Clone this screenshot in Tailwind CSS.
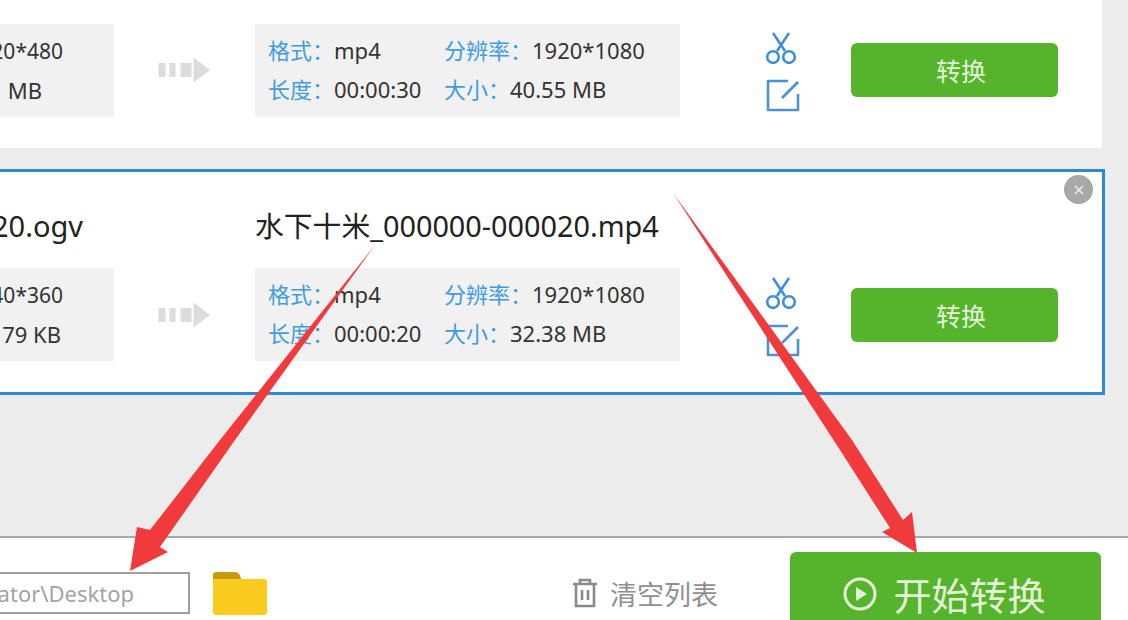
<!DOCTYPE html>
<html lang="zh">
  <head>
    <meta charset="UTF-8" />
    <script src="https://cdn.jsdelivr.net/npm/@tailwindcss/browser@4"></script>
    <title>转换列表</title>
  </head>
  <body class="m-0 bg-[#ececec]">
    <div class="relative w-[1128px] h-[620px] overflow-hidden flex flex-col font-['Noto_Sans','Noto_Sans_CJK_SC',sans-serif] text-[#333]">
      <!-- 第一行 -->
      <div class="h-[148px] w-[1102px] shrink-0 bg-white flex pt-[24px]">
        <div class="w-[114px] h-[93px] bg-[#f1f1f1] shrink-0 flex flex-col items-end pr-[51px] pt-[15px] gap-[14px] text-[22px] leading-[25px] overflow-hidden whitespace-nowrap">
          <span class="text-[21px]">20*480</span>
          <span class="pr-[21px]">MB</span>
        </div>
        <div class="w-[141px] h-[93px] flex items-center justify-center pb-[2px] shrink-0">
          <svg width="54" height="26" viewBox="0 0 54 26" fill="#dcdcdc"><rect x="0.5" y="6" width="7" height="14"/><rect x="11.5" y="6" width="6" height="14"/><rect x="22.5" y="6" width="11" height="14"/><path d="M35.5 0.5 L52 13 L35.5 25.5 Z"/></svg>
        </div>
        <div class="w-[425px] h-[93px] bg-[#f1f1f1] shrink-0 grid grid-cols-[176px_1fr] auto-rows-[25px] pl-[13px] pt-[13px] gap-y-[14px] text-[22px] leading-[25px] whitespace-nowrap">
          <div><span class="text-[#3f9ce0]">格式<span class="font-['Noto_Sans_CJK_TC']">：</span></span>mp4</div>
          <div><span class="text-[#3f9ce0]">分辨率<span class="font-['Noto_Sans_CJK_TC']">：</span></span>1920*1080</div>
          <div><span class="text-[#3f9ce0]">长度<span class="font-['Noto_Sans_CJK_TC']">：</span></span>00:00:30</div>
          <div><span class="text-[#3f9ce0]">大小<span class="font-['Noto_Sans_CJK_TC']">：</span></span>40.55 MB</div>
        </div>
        <div class="w-[171px] shrink-0 flex flex-col items-center pl-[31px] pt-[8px] gap-[15px]">
          <svg width="32" height="32" viewBox="0 0 32 32" fill="none" stroke="#3f8fd8" stroke-width="2.6"><path d="M8 1 L20 19 M24 1 L12 19"/><circle cx="8" cy="25" r="5.8"/><circle cx="24" cy="25" r="5.8"/></svg>
          <svg class="ml-[3px]" width="34" height="33" viewBox="0 0 34 33" fill="none" stroke="#4a93cf" stroke-width="2.6" stroke-linejoin="round"><path d="M22 2 H2 V31 H32 V15"/><path d="M16 19 L32 3"/></svg>
        </div>
        <div class="w-[207px] h-[54px] mt-[19px] bg-[#55b32c] rounded-[6px] shrink-0 flex items-center justify-center pl-[13px] pt-[3px] text-[#e4f3d8] text-[25px]">转换</div>
      </div>

      <!-- 第二行，选中状态 -->
      <div class="relative mt-[21px] h-[226px] w-[1105px] shrink-0 bg-white border-[3px] border-l-0 border-[#2e8ad8] flex flex-col">
        <div class="h-[96px] flex items-start pt-[37px] text-[29px] leading-[34px] text-[#222] whitespace-nowrap">
          <div class="w-[263px] ml-[-8px]">20.ogv</div>
          <div class="text-[28.8px]">水下十米_000000-000020.mp4</div>
        </div>
        <div class="flex">
          <div class="w-[114px] h-[93px] bg-[#f1f1f1] shrink-0 flex flex-col items-end pr-[51px] pt-[15px] gap-[14px] text-[22px] leading-[25px] overflow-hidden whitespace-nowrap">
            <span class="text-[21px]">40*360</span>
            <span class="pr-[2px]">79 KB</span>
          </div>
          <div class="w-[141px] h-[93px] flex items-center justify-center shrink-0">
            <svg width="54" height="26" viewBox="0 0 54 26" fill="#dcdcdc"><rect x="0.5" y="6" width="7" height="14"/><rect x="11.5" y="6" width="6" height="14"/><rect x="22.5" y="6" width="11" height="14"/><path d="M35.5 0.5 L52 13 L35.5 25.5 Z"/></svg>
          </div>
          <div class="w-[425px] h-[93px] bg-[#f1f1f1] shrink-0 grid grid-cols-[176px_1fr] auto-rows-[25px] pl-[13px] pt-[13px] gap-y-[14px] text-[22px] leading-[25px] whitespace-nowrap">
            <div><span class="text-[#3f9ce0]">格式<span class="font-['Noto_Sans_CJK_TC']">：</span></span>mp4</div>
            <div><span class="text-[#3f9ce0]">分辨率<span class="font-['Noto_Sans_CJK_TC']">：</span></span>1920*1080</div>
            <div><span class="text-[#3f9ce0]">长度<span class="font-['Noto_Sans_CJK_TC']">：</span></span>00:00:20</div>
            <div><span class="text-[#3f9ce0]">大小<span class="font-['Noto_Sans_CJK_TC']">：</span></span>32.38 MB</div>
          </div>
          <div class="w-[171px] shrink-0 flex flex-col items-center pl-[31px] pt-[9px] gap-[15px]">
            <svg width="32" height="32" viewBox="0 0 32 32" fill="none" stroke="#3f8fd8" stroke-width="2.6"><path d="M8 1 L20 19 M24 1 L12 19"/><circle cx="8" cy="25" r="5.8"/><circle cx="24" cy="25" r="5.8"/></svg>
            <svg class="ml-[3px]" width="34" height="33" viewBox="0 0 34 33" fill="none" stroke="#4a93cf" stroke-width="2.6" stroke-linejoin="round"><path d="M22 2 H2 V31 H32 V15"/><path d="M16 19 L32 3"/></svg>
          </div>
          <div class="w-[207px] h-[54px] mt-[20px] bg-[#55b32c] rounded-[6px] shrink-0 flex items-center justify-center pl-[13px] pt-[3px] text-[#e4f3d8] text-[25px]">转换</div>
        </div>
        <div class="absolute top-[3px] right-[9px] w-[29px] h-[29px] rounded-full bg-[#a8a8a8] flex items-center justify-center">
          <svg width="12" height="12" viewBox="0 0 12 12" stroke="#eee" stroke-width="1.6"><path d="M2 2 L10 10 M10 2 L2 10"/></svg>
        </div>
      </div>

      <div class="flex-1"></div>

      <!-- 底栏 -->
      <div class="h-[84px] shrink-0 bg-white border-t-2 border-[#a9a9a9] flex items-start">
        <div class="w-[190px] h-[42px] mt-[34px] border-2 border-l-0 border-[#a0a0a0] flex items-center justify-end pr-[54px] text-[22px] text-[#a3a3a3] whitespace-nowrap overflow-hidden shrink-0">ator\Desktop</div>
        <svg class="mt-[33px] ml-[23px] shrink-0" width="54" height="44" viewBox="0 0 54 44"><path d="M0 4 Q0 1 3 1 H22 Q27 1 28 8 H0 Z" fill="#c89a10"/><path d="M0 8 H51 Q54 8 54 11 V41 Q54 44 51 44 H3 Q0 44 0 41 Z" fill="#fbcb1e"/></svg>
        <div class="ml-[305px] mt-[40px] w-[26px] shrink-0">
          <svg width="26" height="30" viewBox="0 0 26 30" fill="none" stroke="#8a8a8a" stroke-width="2.6"><path d="M1 6 H25 M8 6 V2 H18 V6"/><path d="M4 6 V28 H22 V6"/><path d="M10 12 V22 M16 12 V22"/></svg>
        </div>
        <div class="ml-[12px] mt-[39px] w-[180px] shrink-0 text-[27px] leading-[36px] text-[#909090] whitespace-nowrap">清空列表</div>
        <div class="mt-[14px] w-[311px] h-[80px] bg-[#55b32c] rounded-t-[6px] shrink-0 flex items-start justify-center gap-[16px] pr-[2px] pt-[17px] text-[#e4f3d8] text-[38px] leading-[52px]">
          <svg class="mt-[8px]" width="34" height="34" viewBox="0 0 34 34" fill="none" stroke="#e4f3d8" stroke-width="3"><circle cx="17" cy="17" r="15"/><path d="M13 10 L24 17 L13 24 Z" fill="#e4f3d8" stroke="none"/></svg>
          <span>开始转换</span>
        </div>
      </div>

      <!-- 标注箭头 -->
      <svg class="absolute inset-0 pointer-events-none" width="1128" height="620" viewBox="0 0 1128 620">
        <path d="M375 245 L220 440 L150 530 L137 527 L130 571 L168 552 L160 547 L235 440 Z" fill="#f03a3c"/>
        <path d="M673 193 L840 450 L890 528 L882 532 L917 553 L912 512 L903 520 L852 440 Z" fill="#f03a3c"/>
      </svg>
    </div>
  </body>
</html>
